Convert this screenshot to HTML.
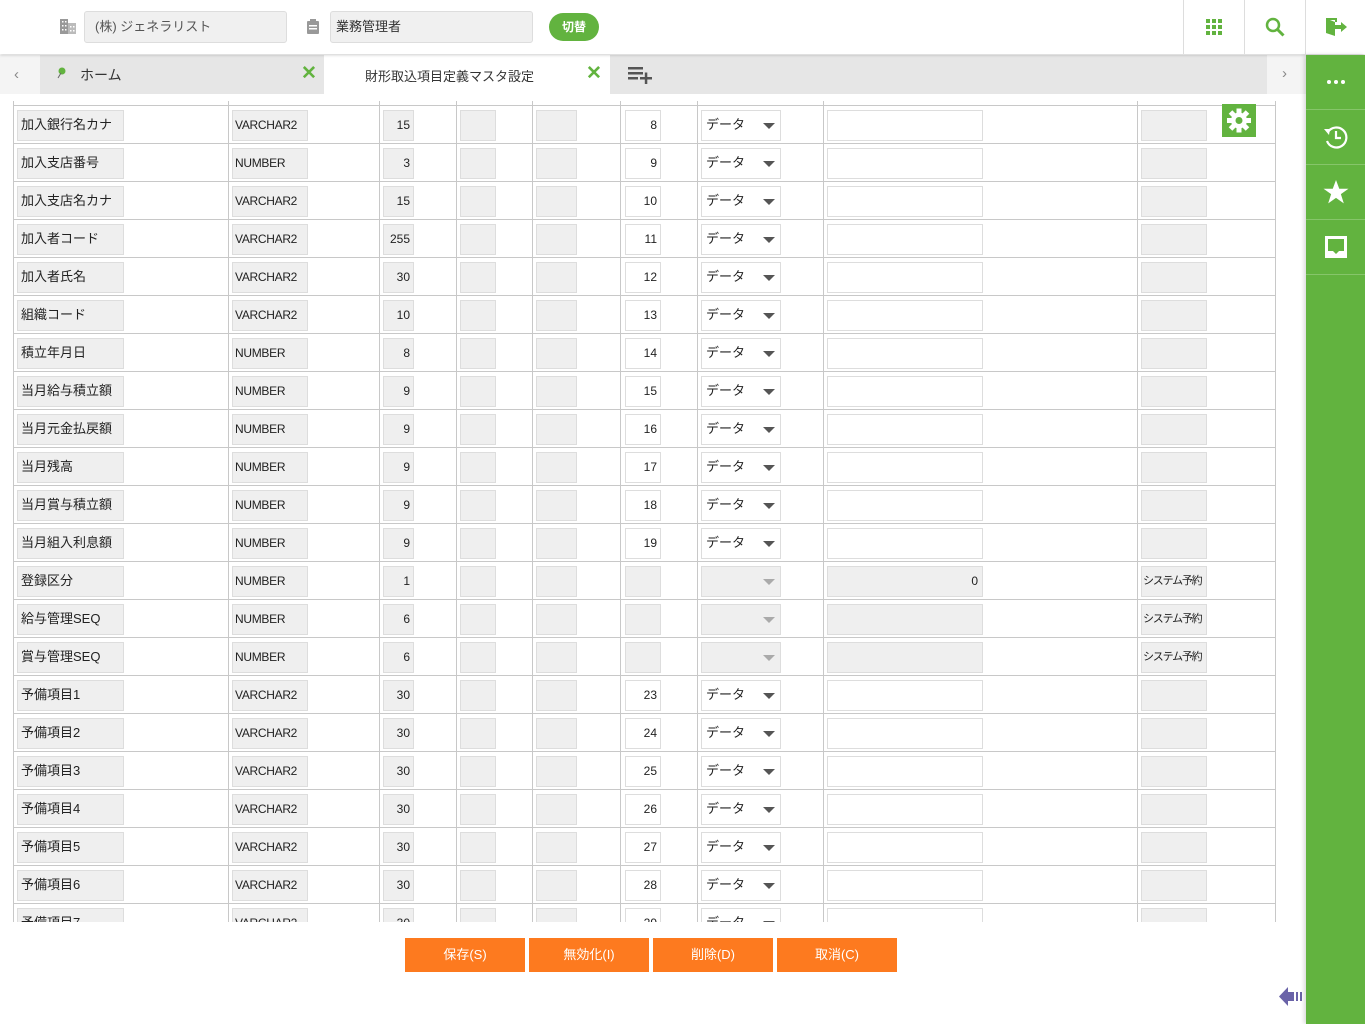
<!DOCTYPE html>
<html><head><meta charset="utf-8">
<style>
*{box-sizing:border-box;margin:0;padding:0}
body{width:1365px;height:1024px;overflow:hidden;background:#fff;font-family:"Liberation Sans","Noto Sans CJK JP",sans-serif;font-size:13px;color:#222;position:relative}
.hdr{position:absolute;left:0;top:0;width:1365px;height:54px;background:#fff;box-shadow:0 1px 3px rgba(0,0,0,.2);z-index:3}
.fld{position:absolute;top:11px;height:32px;background:#f0f0f0;border:1px solid #ddd;border-radius:3px;line-height:30px;padding-left:10px;color:#555;font-size:13px}
.sw{position:absolute;left:549px;top:13px;width:50px;height:28px;border-radius:14px;background:#62b33f;color:#fff;text-align:center;line-height:28px;font-size:12px;font-weight:bold}
.sep{position:absolute;top:0;width:1px;height:54px;background:#ddd}
.tabs{position:absolute;left:0;top:55px;width:1306px;height:39px;background:#f4f4f4}
.sb{position:absolute;left:1306px;top:55px;width:59px;height:969px;background:#62b33f;z-index:4;box-shadow:-2px 0 4px rgba(0,0,0,.15)}
.sb .it{height:55px;border-bottom:1px solid #86c56a;display:flex;align-items:center;justify-content:center}
.grid{position:absolute;left:0;top:95px;width:1306px;height:827px;overflow:hidden}
.v{position:absolute;top:6px;width:1px;height:830px;background:#c8c8c8}
.r{position:absolute;left:14px;width:1262px;height:38px;border-top:1px solid #c8c8c8}
.i{position:absolute;top:4px;height:31px;background:#efefef;border:1px solid #ddd;line-height:28px;font-size:13px;overflow:hidden;white-space:nowrap}
.w{background:#fff}
.c1{left:3px;width:107px;padding-left:3px}
.c2{left:218px;width:76px;padding-left:2px;font-size:12px;letter-spacing:-0.3px}
.c3{left:369px;width:31px;text-align:right;padding-right:3px;font-size:12px}
.c4{left:446px;width:36px}
.c5{left:522px;width:41px}
.c6{left:611px;width:36px;text-align:right;padding-right:3px;font-size:12px}
.c7{left:687px;width:80px;padding-left:4px}
.c7 b{position:absolute;right:5px;top:12px;border-left:6px solid transparent;border-right:6px solid transparent;border-top:6px solid #555}
.c7.d b{border-top-color:#aaa}
.c8{left:813px;width:156px;text-align:right;padding-right:4px;font-size:12px}
.c9{left:1127px;width:66px;padding-left:1px;font-size:11px;letter-spacing:-1.2px}
.btn{position:absolute;top:938px;width:120px;height:34px;background:#fd7a1f;color:#fff;text-align:center;line-height:34px;font-size:13px}
</style></head><body>
<div class="hdr">
  <svg style="position:absolute;left:60px;top:19px" width="16" height="15" viewBox="0 0 16 15"><rect x="0" y="0" width="8" height="15" fill="#999"/><rect x="8" y="4" width="8" height="11" fill="#bbb"/><g fill="#fff"><rect x="2" y="2" width="1.5" height="1.5"/><rect x="5" y="2" width="1.5" height="1.5"/><rect x="2" y="6" width="1.5" height="1.5"/><rect x="5" y="6" width="1.5" height="1.5"/><rect x="2" y="10" width="1.5" height="1.5"/><rect x="5" y="10" width="1.5" height="1.5"/><rect x="10" y="7" width="1.5" height="1.5"/><rect x="13" y="7" width="1.5" height="1.5"/><rect x="10" y="11" width="1.5" height="1.5"/><rect x="13" y="11" width="1.5" height="1.5"/></g></svg>
  <div class="fld" style="left:84px;width:203px">(株) ジェネラリスト</div>
  <svg style="position:absolute;left:307px;top:19px" width="12" height="15" viewBox="0 0 12 15"><rect x="0" y="2" width="12" height="13" rx="1" fill="#999"/><rect x="3" y="0" width="6" height="4" fill="#999"/><rect x="2" y="6" width="8" height="1.5" fill="#fff"/><rect x="2" y="9" width="8" height="1.5" fill="#fff"/></svg>
  <div class="fld" style="left:330px;width:203px;padding-left:5px;color:#333">業務管理者</div>
  <div class="sw">切替</div>
  <div class="sep" style="left:1183px"></div><div class="sep" style="left:1244px"></div><div class="sep" style="left:1305px"></div>
  <svg style="position:absolute;left:1206px;top:19px" width="17" height="17" viewBox="0 0 17 17" fill="#62b33f"><rect x="0" y="0" width="4" height="4"/><rect x="6" y="0" width="4" height="4"/><rect x="12" y="0" width="4" height="4"/><rect x="0" y="6" width="4" height="4"/><rect x="6" y="6" width="4" height="4"/><rect x="12" y="6" width="4" height="4"/><rect x="0" y="12" width="4" height="4"/><rect x="6" y="12" width="4" height="4"/><rect x="12" y="12" width="4" height="4"/></svg>
  <svg style="position:absolute;left:1265px;top:17px" width="20" height="20" viewBox="0 0 20 20"><circle cx="8" cy="8" r="6" fill="none" stroke="#62b33f" stroke-width="2.5"/><line x1="12.5" y1="12.5" x2="18.5" y2="18.5" stroke="#62b33f" stroke-width="3"/></svg>
  <svg style="position:absolute;left:1325px;top:17px" width="23" height="20" viewBox="0 0 23 20" fill="#62b33f"><path d="M1 1h11v4h-2V3H5l5 2v14l-9-3z"/><path d="M10 8h6V5l6 5-6 5v-3h-6z"/></svg>
</div>
<div class="tabs">
  <div style="position:absolute;left:14px;top:11px;color:#888;font-size:15px">&lsaquo;</div>
  <div style="position:absolute;left:40px;top:0;width:1227px;height:39px;background:#e6e6e6"></div>
  <svg style="position:absolute;left:56px;top:12px" width="10" height="12" viewBox="0 0 10 12"><circle cx="6" cy="4" r="3.5" fill="#62b33f"/><line x1="5" y1="6" x2="2" y2="11" stroke="#666" stroke-width="1"/></svg>
  <div style="position:absolute;left:80px;top:10px;font-size:14px;color:#333">ホーム</div>
  <div style="position:absolute;left:301px;top:7px;font-size:19px;color:#62b33f;font-weight:bold">✕</div>
  <div style="position:absolute;left:324px;top:0;width:286px;height:39px;background:#fff"></div>
  <div style="position:absolute;left:365px;top:11px;font-size:13px;color:#333">財形取込項目定義マスタ設定</div>
  <div style="position:absolute;left:586px;top:7px;font-size:19px;color:#62b33f;font-weight:bold">✕</div>
  <svg style="position:absolute;left:628px;top:12px" width="25" height="17" viewBox="0 0 25 17" fill="#555"><rect x="0" y="0" width="15" height="2.5"/><rect x="0" y="5" width="15" height="2.5"/><rect x="0" y="10" width="10" height="2.5"/><rect x="12" y="10" width="12" height="2.5"/><rect x="16.8" y="5.5" width="2.5" height="11.5"/></svg>
  <div style="position:absolute;left:1282px;top:10px;color:#888;font-size:15px">&rsaquo;</div>
</div>
<div class="sb">
  <div class="it"><svg width="18" height="4"><circle cx="2" cy="2" r="2" fill="#fff"/><circle cx="9" cy="2" r="2" fill="#fff"/><circle cx="16" cy="2" r="2" fill="#fff"/></svg></div>
  <div class="it"><svg width="28" height="28" viewBox="0 0 28 28"><path d="M6 9A10 10 0 1 1 5 18" fill="none" stroke="#fff" stroke-width="2.2"/><path d="M2 6l6 0-1 6z" fill="#fff"/><path d="M14 8v7h5" fill="none" stroke="#fff" stroke-width="2.2"/></svg></div>
  <div class="it"><svg width="26" height="25" viewBox="0 0 24 23"><path d="M12 0l3 8h8.5l-7 5 2.7 8.5L12 16.5 4.8 21.5 7.5 13 .5 8H9z" fill="#fff"/></svg></div>
  <div class="it"><svg width="26" height="26" viewBox="0 0 26 26"><path d="M2 2h22v22H2z" fill="#fff"/><path d="M5 5h16v12h-5l-3 3-3-3H5z" fill="#62b33f"/></svg></div>
</div>
<div class="grid">
  <div class="v" style="left:13px"></div><div class="v" style="left:228px"></div><div class="v" style="left:379px"></div><div class="v" style="left:456px"></div><div class="v" style="left:532px"></div><div class="v" style="left:620px"></div><div class="v" style="left:697px"></div><div class="v" style="left:823px"></div><div class="v" style="left:1137px"></div><div class="v" style="left:1275px"></div>
  <div class="r" style="top:10px"><div class="i c1">加入銀行名カナ</div><div class="i c2">VARCHAR2</div><div class="i c3">15</div><div class="i c4"></div><div class="i c5"></div><div class="i c6 w">8</div><div class="i c7 w">データ<b></b></div><div class="i c8 w"></div><div class="i c9"></div></div>
  <div class="r" style="top:48px"><div class="i c1">加入支店番号</div><div class="i c2">NUMBER</div><div class="i c3">3</div><div class="i c4"></div><div class="i c5"></div><div class="i c6 w">9</div><div class="i c7 w">データ<b></b></div><div class="i c8 w"></div><div class="i c9"></div></div>
  <div class="r" style="top:86px"><div class="i c1">加入支店名カナ</div><div class="i c2">VARCHAR2</div><div class="i c3">15</div><div class="i c4"></div><div class="i c5"></div><div class="i c6 w">10</div><div class="i c7 w">データ<b></b></div><div class="i c8 w"></div><div class="i c9"></div></div>
  <div class="r" style="top:124px"><div class="i c1">加入者コード</div><div class="i c2">VARCHAR2</div><div class="i c3">255</div><div class="i c4"></div><div class="i c5"></div><div class="i c6 w">11</div><div class="i c7 w">データ<b></b></div><div class="i c8 w"></div><div class="i c9"></div></div>
  <div class="r" style="top:162px"><div class="i c1">加入者氏名</div><div class="i c2">VARCHAR2</div><div class="i c3">30</div><div class="i c4"></div><div class="i c5"></div><div class="i c6 w">12</div><div class="i c7 w">データ<b></b></div><div class="i c8 w"></div><div class="i c9"></div></div>
  <div class="r" style="top:200px"><div class="i c1">組織コード</div><div class="i c2">VARCHAR2</div><div class="i c3">10</div><div class="i c4"></div><div class="i c5"></div><div class="i c6 w">13</div><div class="i c7 w">データ<b></b></div><div class="i c8 w"></div><div class="i c9"></div></div>
  <div class="r" style="top:238px"><div class="i c1">積立年月日</div><div class="i c2">NUMBER</div><div class="i c3">8</div><div class="i c4"></div><div class="i c5"></div><div class="i c6 w">14</div><div class="i c7 w">データ<b></b></div><div class="i c8 w"></div><div class="i c9"></div></div>
  <div class="r" style="top:276px"><div class="i c1">当月給与積立額</div><div class="i c2">NUMBER</div><div class="i c3">9</div><div class="i c4"></div><div class="i c5"></div><div class="i c6 w">15</div><div class="i c7 w">データ<b></b></div><div class="i c8 w"></div><div class="i c9"></div></div>
  <div class="r" style="top:314px"><div class="i c1">当月元金払戻額</div><div class="i c2">NUMBER</div><div class="i c3">9</div><div class="i c4"></div><div class="i c5"></div><div class="i c6 w">16</div><div class="i c7 w">データ<b></b></div><div class="i c8 w"></div><div class="i c9"></div></div>
  <div class="r" style="top:352px"><div class="i c1">当月残高</div><div class="i c2">NUMBER</div><div class="i c3">9</div><div class="i c4"></div><div class="i c5"></div><div class="i c6 w">17</div><div class="i c7 w">データ<b></b></div><div class="i c8 w"></div><div class="i c9"></div></div>
  <div class="r" style="top:390px"><div class="i c1">当月賞与積立額</div><div class="i c2">NUMBER</div><div class="i c3">9</div><div class="i c4"></div><div class="i c5"></div><div class="i c6 w">18</div><div class="i c7 w">データ<b></b></div><div class="i c8 w"></div><div class="i c9"></div></div>
  <div class="r" style="top:428px"><div class="i c1">当月組入利息額</div><div class="i c2">NUMBER</div><div class="i c3">9</div><div class="i c4"></div><div class="i c5"></div><div class="i c6 w">19</div><div class="i c7 w">データ<b></b></div><div class="i c8 w"></div><div class="i c9"></div></div>
  <div class="r" style="top:466px"><div class="i c1">登録区分</div><div class="i c2">NUMBER</div><div class="i c3">1</div><div class="i c4"></div><div class="i c5"></div><div class="i c6"></div><div class="i c7 d"><b></b></div><div class="i c8">0</div><div class="i c9">システム予約</div></div>
  <div class="r" style="top:504px"><div class="i c1">給与管理SEQ</div><div class="i c2">NUMBER</div><div class="i c3">6</div><div class="i c4"></div><div class="i c5"></div><div class="i c6"></div><div class="i c7 d"><b></b></div><div class="i c8"></div><div class="i c9">システム予約</div></div>
  <div class="r" style="top:542px"><div class="i c1">賞与管理SEQ</div><div class="i c2">NUMBER</div><div class="i c3">6</div><div class="i c4"></div><div class="i c5"></div><div class="i c6"></div><div class="i c7 d"><b></b></div><div class="i c8"></div><div class="i c9">システム予約</div></div>
  <div class="r" style="top:580px"><div class="i c1">予備項目1</div><div class="i c2">VARCHAR2</div><div class="i c3">30</div><div class="i c4"></div><div class="i c5"></div><div class="i c6 w">23</div><div class="i c7 w">データ<b></b></div><div class="i c8 w"></div><div class="i c9"></div></div>
  <div class="r" style="top:618px"><div class="i c1">予備項目2</div><div class="i c2">VARCHAR2</div><div class="i c3">30</div><div class="i c4"></div><div class="i c5"></div><div class="i c6 w">24</div><div class="i c7 w">データ<b></b></div><div class="i c8 w"></div><div class="i c9"></div></div>
  <div class="r" style="top:656px"><div class="i c1">予備項目3</div><div class="i c2">VARCHAR2</div><div class="i c3">30</div><div class="i c4"></div><div class="i c5"></div><div class="i c6 w">25</div><div class="i c7 w">データ<b></b></div><div class="i c8 w"></div><div class="i c9"></div></div>
  <div class="r" style="top:694px"><div class="i c1">予備項目4</div><div class="i c2">VARCHAR2</div><div class="i c3">30</div><div class="i c4"></div><div class="i c5"></div><div class="i c6 w">26</div><div class="i c7 w">データ<b></b></div><div class="i c8 w"></div><div class="i c9"></div></div>
  <div class="r" style="top:732px"><div class="i c1">予備項目5</div><div class="i c2">VARCHAR2</div><div class="i c3">30</div><div class="i c4"></div><div class="i c5"></div><div class="i c6 w">27</div><div class="i c7 w">データ<b></b></div><div class="i c8 w"></div><div class="i c9"></div></div>
  <div class="r" style="top:770px"><div class="i c1">予備項目6</div><div class="i c2">VARCHAR2</div><div class="i c3">30</div><div class="i c4"></div><div class="i c5"></div><div class="i c6 w">28</div><div class="i c7 w">データ<b></b></div><div class="i c8 w"></div><div class="i c9"></div></div>
  <div class="r" style="top:808px"><div class="i c1">予備項目7</div><div class="i c2">VARCHAR2</div><div class="i c3">30</div><div class="i c4"></div><div class="i c5"></div><div class="i c6 w">29</div><div class="i c7 w">データ<b></b></div><div class="i c8 w"></div><div class="i c9"></div></div>
  <svg style="position:absolute;left:1222px;top:9px" width="34" height="33" viewBox="0 0 34 33"><rect width="34" height="33" fill="#62b33f"/><g transform="translate(17 16.5)" fill="#fff"><circle r="8"/><rect x="-2.5" y="-12" width="5" height="24"/><rect x="-12" y="-2.5" width="24" height="5"/><g transform="rotate(45)"><rect x="-2.5" y="-12" width="5" height="24"/><rect x="-12" y="-2.5" width="24" height="5"/></g><circle r="3.5" fill="#62b33f"/></g></svg>
</div>
<div class="btn" style="left:405px">保存(S)</div>
<div class="btn" style="left:529px">無効化(I)</div>
<div class="btn" style="left:653px">削除(D)</div>
<div class="btn" style="left:777px">取消(C)</div>
<svg style="position:absolute;left:1279px;top:987px" width="26" height="19" viewBox="0 0 26 19" fill="#6a63a8"><path d="M0 9.5L9 0v5h6v9H9v5z"/><rect x="17" y="5" width="2" height="9"/><rect x="21" y="5" width="2" height="9"/></svg>
</body></html>
